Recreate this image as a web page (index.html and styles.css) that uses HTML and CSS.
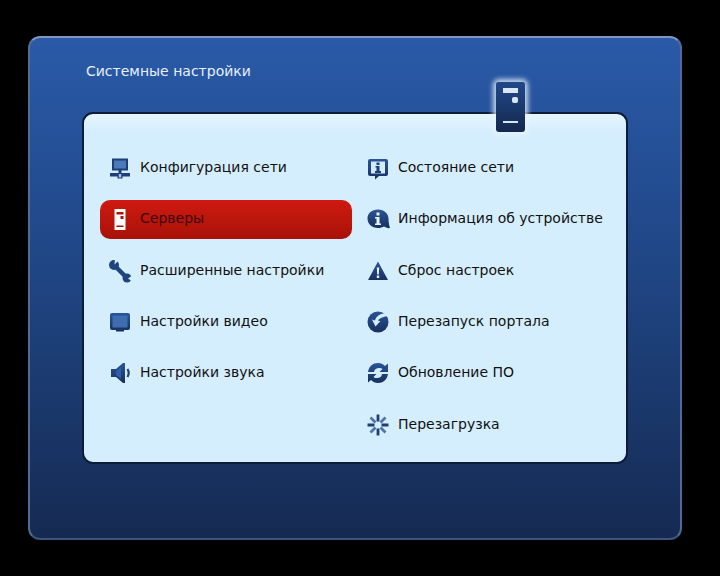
FILE: index.html
```html
<!DOCTYPE html>
<html lang="ru">
<head>
<meta charset="UTF-8" />
<title>Системные настройки</title>
<link rel="stylesheet" href="styles.css">
</head>
<body>
  <svg class="defs" width="0" height="0">
    <defs>
      <linearGradient id="ico" x1="0" y1="0" x2="0" y2="1">
        <stop offset="0" stop-color="#2a5596" />
        <stop offset="1" stop-color="#17305f" />
      </linearGradient>
    </defs>
  </svg>
  <div class="window">
    <h1 class="title">Системные настройки</h1>
    <div class="server-badge">
      <span class="badge-slot"></span>
      <span class="badge-dot"></span>
      <span class="badge-line"></span>
    </div>
    <div class="panel">
      <div class="column">
        <div class="item">
          <svg class="icon" viewBox="0 0 24 24"><path fill="#1d3f75" d="M4 2.500h16v12h-6.500V17H22v3.500h-7.500v2h-5v-2H2V17h8.500v-2.500H4z" /><path fill="#4a7ab8" d="M6 4.500h12v8H6z" /><path fill="#a9c6e6" d="M10.800 18h2.400v3.500h-2.400z" /></svg>
          <span>Конфигурация сети</span>
        </div>
        <div class="item selected">
          <svg class="icon" viewBox="0 0 24 24"><path fill="#fff" d="M6.500 2h11v21h-11z" /><path fill="#a81208" d="M8.500 5h7v2.500h-7zM12.500 9h3v3h-3zM8.500 18.500h7v1.500h-7z" /></svg>
          <span>Серверы</span>
        </div>
        <div class="item">
          <svg class="icon" viewBox="0 0 24 24"><g fill="#1f4580"><circle cx="6" cy="6" r="5" /><circle cx="19" cy="19" r="4.500" /></g><path fill="none" stroke="#1f4580" stroke-width="4.500" d="M6 6l13 13" /><path fill="#d5eefd" d="M6.500 5.500L7 0h5zM20 19.500l4.500-3v6z" /></svg>
          <span>Расширенные настройки</span>
        </div>
        <div class="item">
          <svg class="icon" viewBox="0 0 24 24"><path fill="url(#ico)" d="M2 5a2 2 0 0 1 2-2h16a2 2 0 0 1 2 2v13a2 2 0 0 1-2 2h-4v1.500H8V20H4a2 2 0 0 1-2-2z" /><path fill="#3f6cb0" d="M4.500 5.500h15v12h-15z" /></svg>
          <span>Настройки видео</span>
        </div>
        <div class="item">
          <svg class="icon" viewBox="0 0 24 24"><path fill="url(#ico)" d="M3 8h5l7-6h2v20h-2l-7-6H3z" /><path fill="#2f5ea8" d="M8 10l5-4v12l-5-4z" /><path fill="none" stroke="#1d3f75" stroke-width="2.200" d="M19.500 8c1.500 2.500 1.500 5.500 0 8" /></svg>
          <span>Настройки звука</span>
        </div>
      </div>
      <div class="column">
        <div class="item">
          <svg class="icon" viewBox="0 0 24 24"><path fill="url(#ico)" d="M2 5a2 2 0 0 1 2-2h16a2 2 0 0 1 2 2v13a2 2 0 0 1-2 2h-7l-4 3.500V20H4a2 2 0 0 1-2-2z" /><path fill="#d3ecfd" d="M5 5.500h14v12H5z" /><path fill="#1d3f75" d="M10.500 6.500h3v2.500h-3zM9.500 10h4v5h1.500v2H9v-2h1.500v-3.500h-1z" /></svg>
          <span>Состояние сети</span>
        </div>
        <div class="item">
          <svg class="icon" viewBox="0 0 24 24"><path fill="url(#ico)" d="M12 2.500c6 0 10.500 4 10.500 9 0 3 .5 6.500 1.500 9.500-2 .5-4.500-.5-6-1.500-1.500.8-3.500 1.500-6 1.500-6 0-10.500-4-10.500-9.500S6 2.500 12 2.500z" /><path fill="#e6f3fd" d="M10.500 5.500h3v3h-3zM9 10h4.500v6.500H15V18H9v-1.500h1.500v-5H9z" /></svg>
          <span>Информация об устройстве</span>
        </div>
        <div class="item">
          <svg class="icon" viewBox="0 0 24 24"><path fill="url(#ico)" d="M12 2.500l10 18.500H2z" /><path fill="#e6f3fd" d="M10.800 8.500h2.400l-.4 7h-1.600zM10.800 16.500h2.400v2.500h-2.400z" /></svg>
          <span>Сброс настроек</span>
        </div>
        <div class="item">
          <svg class="icon" viewBox="0 0 24 24"><circle cx="12" cy="12" r="10.500" fill="url(#ico)" /><path fill="#d5eefd" d="M22 3.500C15.500 2.500 10 6 9 10.500L6 9.500l3.500 7 5-5.500-2.500-.3C13 8.500 17 6.500 22 6z" /></svg>
          <span>Перезапуск портала</span>
        </div>
        <div class="item">
          <svg class="icon" viewBox="0 0 24 24"><path fill="url(#ico)" d="M2 11C3 5 7 2 12 2c3 0 5 1 7 3l3-2.500V11h-8.500l3-3c-1-1-2-1-3.500-1-2.500 0-4.500 1-5 4zM22 13c-1 6-5 9-10 9-3 0-5-1-7-3l-3 2.500V13h8.500l-3 3c1 1 2 1 3.500 1 2.500 0 4.500-1 5-4z" /></svg>
          <span>Обновление ПО</span>
        </div>
        <div class="item">
          <svg class="icon" viewBox="0 0 24 24"><g fill="none" stroke="#1d3f75" stroke-width="2.800"><path d="M12 1.500v7M12 15.500v7M1.500 12h7M15.500 12h7" /><path stroke="#4f74a8" d="M4.500 4.500l5 5M14.500 14.500l5 5M19.500 4.500l-5 5M9.500 14.500l-5 5" /></g></svg>
          <span>Перезагрузка</span>
        </div>
      </div>
    </div>
  </div>
</body>
</html>
```

FILE: styles.css
```css
body {
  margin: 0;
  height: 576px;
  background: #000;
  font-family: "DejaVu Sans", sans-serif;
  overflow: hidden;
}
.defs {
  display: block;
}
.window {
  position: relative;
  box-sizing: border-box;
  width: 654px;
  height: 504px;
  margin: 36px 0 0 28px;
  padding: 24px 52px 0;
  background: linear-gradient(#2a5aa8 0%, #244f95 25%, #1d3f78 60%, #152a52 100%);
  border: 2px solid #4f6b96;
  border-top-color: #7d97bf;
  border-bottom-color: #3c5479;
  border-radius: 12px;
}
.title {
  margin: 0 0 0 4px;
  height: 50px;
  font-size: 14px;
  font-weight: 400;
  line-height: 18px;
  color: #e6f0fb;
}
.panel {
  box-sizing: border-box;
  display: flex;
  width: 546px;
  height: 352px;
  padding: 34.600px 0 0 16px;
  background: linear-gradient(#e6f5fe, #d5eefd 5%);
  border: 2px solid #0d1c38;
  border-radius: 11px;
}
.column {
  flex: none;
  display: flex;
  flex-direction: column;
  gap: 12.300px;
  width: 258px;
}
.item {
  display: flex;
  align-items: center;
  gap: 8px;
  box-sizing: border-box;
  width: 252px;
  height: 39px;
  padding-left: 8px;
  border-radius: 10px;
  font-size: 14px;
  color: #111;
  white-space: nowrap;
}
.item span {
  margin-bottom: 2px;
}
.selected {
  background: linear-gradient(#cf1a10, #a81208);
  color: #3a0806;
}
.icon {
  flex: none;
  width: 24px;
  height: 24px;
}
.server-badge {
  position: absolute;
  left: 466px;
  top: 44px;
  box-sizing: border-box;
  width: 29px;
  height: 50px;
  background: linear-gradient(#21488a, #14294f);
  border-radius: 3px;
  box-shadow: 0 0 5px 3px rgba(235, 245, 250, 0.8);
}
.badge-slot,
.badge-dot,
.badge-line {
  position: absolute;
  background: #d9e6f5;
}
.badge-slot {
  left: 7px;
  top: 6px;
  width: 15px;
  height: 5px;
}
.badge-dot {
  left: 16px;
  top: 15px;
  width: 6px;
  height: 6px;
  border-radius: 2px;
}
.badge-line {
  left: 7px;
  top: 39px;
  width: 15px;
  height: 2px;
}
```
